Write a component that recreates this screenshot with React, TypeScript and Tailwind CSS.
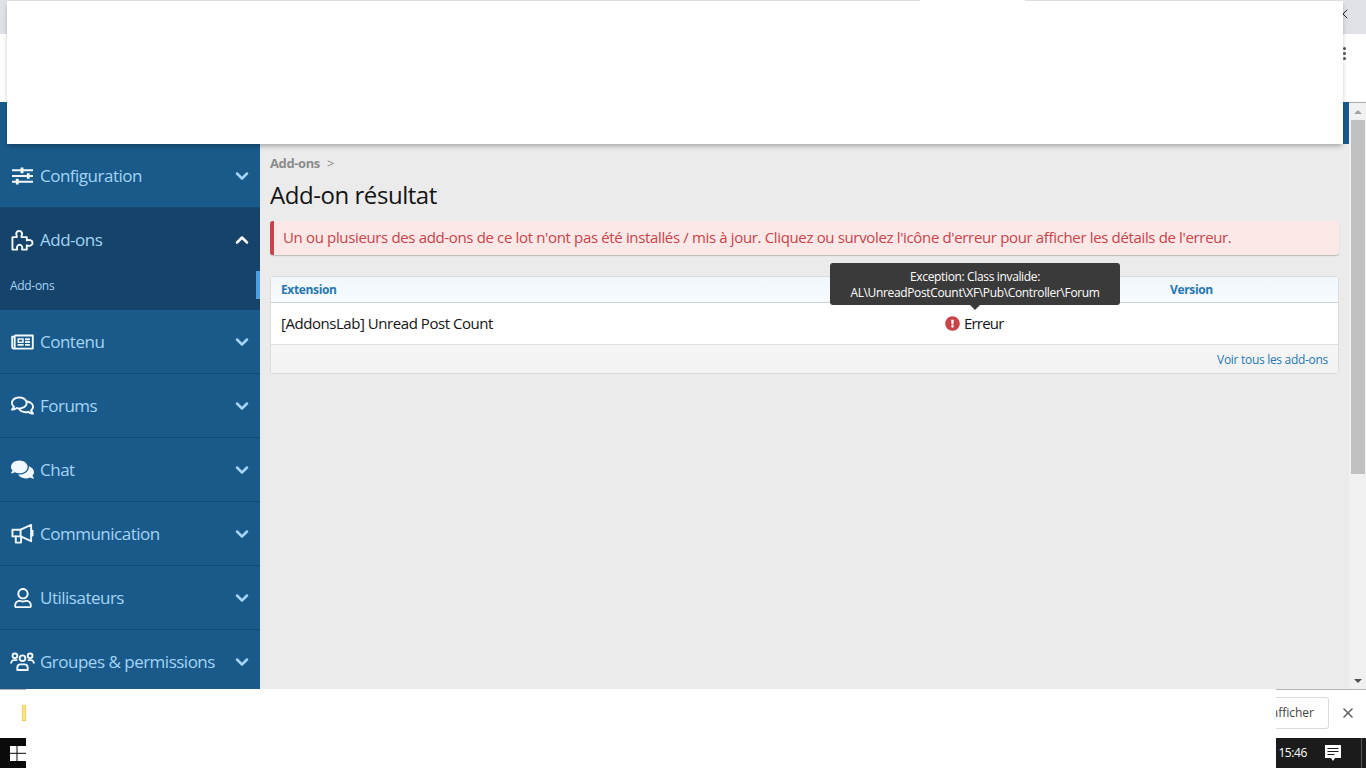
import { ChevronDown, ChevronLeft, ChevronUp, X } from 'lucide-react';
import type { ComponentType } from 'react';
import { FaRegNewspaper, FaRegComments, FaComments, FaRegUser, FaExclamationCircle } from 'react-icons/fa';

const font = "font-['Open_Sans','Noto_Sans',sans-serif]";

type IconProps = { className?: string };
type NavItem = { label: string; icon: ComponentType<IconProps>; size: string };

const SlidersIcon = ({ className }: IconProps) => (
  <svg viewBox="0 0 22 18" className={className} fill="none" stroke="currentColor" strokeWidth="2">
    <path d="M0 3h22M0 9h22M0 15h22" />
    <path d="M10.5 0v6M17 6v6M5.5 12v6" strokeWidth="3" />
  </svg>
);

const PuzzleIcon = ({ className }: IconProps) => (
  <svg viewBox="0 0 24 24" className={className} fill="none" stroke="currentColor" strokeWidth="2" strokeLinejoin="round">
    <path d="M1.5 8.5H6V7C4.8 5 5.5 2 8.5 2S12.2 5 11 7v1.5h5.5V12c2-1.2 6-.5 6 2.5s-4 3.7-6 2.5v4.5h-5c1-3-.5-5-2.500-5s-3.500 2-2.500 5h-5z" />
  </svg>
);

const BullhornIcon = ({ className }: IconProps) => (
  <svg viewBox="0 0 24 24" className={className} fill="none" stroke="currentColor" strokeWidth="2" strokeLinejoin="round" strokeLinecap="round">
    <path d="M1.500 8h8.500L21 3v17l-11-5H1.500z" />
    <path d="M22.500 9v5M10 8v7M5 15v6.500h5.500V15" />
  </svg>
);

const UsersIcon = ({ className }: IconProps) => (
  <svg viewBox="0 0 26 20" className={className} fill="none" stroke="currentColor" strokeWidth="2" strokeLinejoin="round">
    <circle cx="13" cy="6.500" r="3" />
    <circle cx="5" cy="4" r="2.500" />
    <circle cx="21" cy="4" r="2.500" />
    <path d="M7.500 19v-2.500c0-2.500 1.500-3.500 3.500-3.500h4c2 0 3.500 1 3.500 3.500V19z" />
    <path d="M1 12c0-2 1.500-3.500 3-3.500h3.500M25 12c0-2-1.500-3.500-3-3.500h-3.500" />
  </svg>
);

const WinLogo = () => (
  <svg viewBox="0 0 16 15" className="h-[15px] w-[16px]" fill="#fff">
    <rect x="0" y="0" width="6.500" height="6.800" />
    <rect x="7.500" y="0" width="8.500" height="6.800" />
    <rect x="0" y="7.800" width="6.500" height="7.200" />
    <rect x="7.500" y="7.800" width="8.500" height="7.200" />
  </svg>
);

const NotifIcon = () => (
  <svg viewBox="0 0 16 16" className="h-[16px] w-[16px]">
    <path fill="#fff" d="M0 0h16v13h-6l-2 3-2-3H0z" />
    <path stroke="#1b1b1b" strokeWidth="1.200" d="M2.500 3.500h11M2.500 6.500h11M2.500 9.500h7" />
  </svg>
);

const navTop: NavItem[] = [{ label: 'Configuration', icon: SlidersIcon, size: 'h-[18px] w-[21px]' }];
const navBottom: NavItem[] = [
  { label: 'Contenu', icon: FaRegNewspaper, size: 'h-[20px] w-[23px]' },
  { label: 'Forums', icon: FaRegComments, size: 'h-[21px] w-[23px]' },
  { label: 'Chat', icon: FaComments, size: 'h-[21px] w-[23px]' },
  { label: 'Communication', icon: BullhornIcon, size: 'h-[23px] w-[23px]' },
  { label: 'Utilisateurs', icon: FaRegUser, size: 'h-[20px] w-[18px]' },
  { label: 'Groupes & permissions', icon: UsersIcon, size: 'h-[19px] w-[25px]' },
];

const NavRow = ({ item }: { item: NavItem }) => {
  const Icon = item.icon;
  return (
    <div className="flex h-[64px] shrink-0 items-center border-b border-[#154b73] bg-[#1a5a8a] pl-[10px] pr-[8px] text-[#a3d4f5]">
      <span className="mr-[5px] flex w-[25px] justify-center text-[#f2f9fe]">
        <Icon className={item.size} />
      </span>
      <span className="flex-1 text-[17px] tracking-[-0.5px]">{item.label}</span>
      <ChevronDown className="h-[20px] w-[20px]" strokeWidth={3} />
    </div>
  );
};

const App = () => {
  return (
    <div className={`relative flex h-[768px] w-[1366px] flex-col overflow-hidden bg-white ${font}`}>
      {/* browser chrome */}
      <div className="flex h-[34px] shrink-0 items-center justify-end bg-[#dee1e6] pb-[6px] pr-[13px]">
        <ChevronLeft className="h-[16px] w-[16px] text-[#222]" strokeWidth={1.5} />
      </div>
      <div className="flex h-[68px] shrink-0 items-start justify-end bg-white pr-[20px] pt-[13px]">
        <div className="flex flex-col gap-[2px]">
          <span className="h-[3px] w-[3px] rounded-full bg-[#555]" />
          <span className="h-[3px] w-[3px] rounded-full bg-[#555]" />
          <span className="h-[3px] w-[3px] rounded-full bg-[#555]" />
        </div>
      </div>

      <div className="flex h-[587px] shrink-0">
        <div className="flex w-[1349px] flex-col">
          <div className="h-[42px] shrink-0 bg-[#1a5a8a]" />
          <div className="flex min-h-0 flex-1">
            {/* sidebar */}
            <nav className="flex w-[260px] shrink-0 flex-col overflow-hidden bg-[#1a5a8a]">
              {navTop.map((item) => (
                <NavRow key={item.label} item={item} />
              ))}
              <div className="h-[102px] shrink-0 bg-[#15436a] text-[#a3d4f5]">
                <div className="flex h-[64px] items-center pl-[10px] pr-[8px]">
                  <span className="mr-[5px] flex w-[25px] justify-center text-[#f2f9fe]">
                    <PuzzleIcon className="h-[23px] w-[23px]" />
                  </span>
                  <span className="flex-1 text-[17px] tracking-[-0.5px]">Add-ons</span>
                  <ChevronUp className="h-[20px] w-[20px] text-white" strokeWidth={3} />
                </div>
                <div className="-mt-px flex h-[28px] items-center justify-between pl-[10px]">
                  <span className="pt-[2px] text-[12px] tracking-[-0.3px]">Add-ons</span>
                  <span className="h-[28px] w-[4px] bg-[#4f9fe0]" />
                </div>
              </div>
              {navBottom.map((item) => (
                <NavRow key={item.label} item={item} />
              ))}
            </nav>

            {/* content */}
            <main className="min-w-0 flex-1 bg-[#ebebeb] pl-[10px] pr-[10px] text-[#141414]">
              <div className="mt-[10px] flex items-center text-[13px] font-bold tracking-[-0.4px] text-[#8c8c8c]">
                Add-ons<span className="ml-[7px] font-normal">&gt;</span>
              </div>
              <h1 className="mt-[5px] text-[24px] leading-[32px] tracking-[-0.45px]">Add-on résultat</h1>
              <div className="mt-[10px] flex h-[34px] items-center rounded-[3px] border-l-[4px] border-[#c84448] bg-[#fde8e8] pl-[9px] text-[15px] tracking-[-0.35px] text-[#c84448] shadow-[0_1px_1px_rgba(0,0,0,0.2)]">
                Un ou plusieurs des add-ons de ce lot n'ont pas été installés / mis à jour. Cliquez ou survolez l'icône d'erreur pour afficher les détails de l'erreur.
              </div>

              <div className="relative mt-[21px] overflow-visible rounded-[3px] border border-[#dcdcdc] bg-white">
                <div className="grid h-[26px] grid-cols-[664px_225px_1fr] items-center border-b border-[#c8d2da] bg-linear-to-b from-[#f0f7fc] to-[#f8fbfe] px-[10px] pt-[2px] text-[12px] font-bold tracking-[-0.35px] text-[#2577b1]">
                  <span>Extension</span>
                  <span />
                  <span>Version</span>
                </div>
                <div className="grid h-[42px] grid-cols-[664px_225px_1fr] items-center border-b border-[#dedede] px-[10px] text-[15px] tracking-[-0.45px]">
                  <span>[AddonsLab] Unread Post Count</span>
                  <span className="flex items-center gap-[4px] tracking-[-0.8px]">
                    <FaExclamationCircle className="h-[15px] w-[15px] text-[#c84448]" />
                    Erreur
                  </span>
                  <span />
                </div>
                <div className="flex h-[28px] items-center justify-end bg-linear-to-b from-[#f6f6f6] to-[#f2f2f2] px-[10px] pt-[2px] text-[12px] tracking-[-0.3px] text-[#2577b1]">
                  Voir tous les add-ons
                </div>

                {/* tooltip */}
                <div className="absolute left-[559px] top-[-14px] w-[290px] rounded-[3px] bg-[#3a3a3a] pb-[4px] pt-[6px] text-center text-[12px] leading-[16px] tracking-[-0.35px] text-white">
                  <div>Exception: Class invalide:</div>
                  <div>AL\UnreadPostCount\XF\Pub\Controller\Forum</div>
                  <span className="absolute bottom-[-5px] left-[140px] h-0 w-0 border-x-[5px] border-t-[5px] border-x-transparent border-t-[#3a3a3a]" />
                </div>
              </div>
            </main>
          </div>
        </div>

        {/* scrollbar */}
        <div className="flex w-[17px] shrink-0 flex-col items-center border-t border-[#aaa] bg-[#f1f1f1]">
          <div className="flex h-[17px] w-full items-center justify-center">
            <span className="h-0 w-0 border-x-[4px] border-b-[4px] border-x-transparent border-b-[#a3a3a3]" />
          </div>
          <div className="h-[354px] w-[14px] bg-[#c1c1c1]" />
          <div className="flex-1" />
          <div className="flex h-[17px] w-full items-center justify-center">
            <span className="h-0 w-0 border-x-[4px] border-t-[4px] border-x-transparent border-t-[#505050]" />
          </div>
        </div>
      </div>

      {/* download bar */}
      <div className="flex h-[49px] shrink-0 items-center justify-end border-t border-[#b4b4b4] bg-white pb-[2px] pr-[10px]">
        <div className="flex h-[32px] w-[100px] items-center justify-end rounded-[3px] border border-[#dadce0] pr-[14px] text-[12px] text-[#444]">
          afficher
        </div>
        <X className="ml-[11px] h-[16px] w-[16px] text-[#666]" strokeWidth={2.5} />
      </div>

      {/* taskbar */}
      <div className="flex h-[30px] shrink-0 items-center justify-between bg-[#1b1b1b] text-white">
        <div className="flex h-full w-[26px] items-center justify-end bg-[#0a0a0a]">
          <WinLogo />
        </div>
        <div className="flex h-full items-center">
          <span className="mr-[18px] text-[12px] tracking-[-0.4px]">15:46</span>
          <NotifIcon />
          <span className="ml-[20px] h-full w-px bg-[#555]" />
          <span className="w-[4px]" />
        </div>
      </div>

      {/* blanked out areas of the capture */}
      <div className="absolute left-[7px] top-[1px] h-[143px] w-[1336px] bg-white shadow-[0_3px_5px_-1px_rgba(0,0,0,0.3)]" />
      <div className="absolute left-[920px] top-0 h-[1px] w-[105px] bg-white" />
      <div className="absolute left-[26px] top-[689px] h-[79px] w-[1250px] bg-white" />
      <div className="absolute left-[22px] top-[705px] h-[16px] w-[4px] border border-[#f0d060] bg-[#fbe58c]" />
    </div>
  );
};

export default App;
